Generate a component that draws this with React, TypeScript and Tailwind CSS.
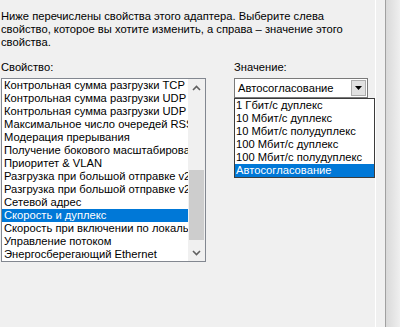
import React from "react";

const PROPS = [
  "Контрольная сумма разгрузки TCP (IPv6)",
  "Контрольная сумма разгрузки UDP (IPv4)",
  "Контрольная сумма разгрузки UDP (IPv6)",
  "Максимальное число очередей RSS",
  "Модерация прерывания",
  "Получение бокового масштабирования",
  "Приоритет & VLAN",
  "Разгрузка при большой отправке v2 (IPv4)",
  "Разгрузка при большой отправке v2 (IPv6)",
  "Сетевой адрес",
  "Скорость и дуплекс",
  "Скорость при включении по локальной сети",
  "Управление потоком",
  "Энергосберегающий Ethernet",
];

const VALUES = [
  "1 Гбит/с дуплекс",
  "10 Мбит/с дуплекс",
  "10 Мбит/с полудуплекс",
  "100 Мбит/с дуплекс",
  "100 Мбит/с полудуплекс",
  "Автосогласование",
];

const Chevron: React.FC<{ up?: boolean }> = ({ up }) => (
  <svg width="9" height="6" viewBox="0 0 9 6">
    <path
      d={up ? "M1 5 L4.5 1.5 L8 5" : "M1 1 L4.5 4.5 L8 1"}
      fill="none"
      stroke="#606060"
      strokeWidth="1.6"
    />
  </svg>
);

const App: React.FC = () => {
  const selectedProp = "Скорость и дуплекс";
  const selectedValue = "Автосогласование";

  return (
    <div className="flex h-[327px] w-[400px] bg-[#f0f0f0] font-['Liberation_Sans',Arial,sans-serif] text-[11.2px] leading-[13px] text-black overflow-hidden">
      {/* page content */}
      <div className="relative w-[375px] shrink-0 pl-[1px] pt-[10px]">
        <p>
          Ниже перечислены свойства этого адаптера. Выберите слева
          <br />
          свойство, которое вы хотите изменить, а справа – значение этого
          <br />
          свойства.
        </p>

        <div className="mt-[12px] flex">
          {/* left: property list */}
          <div className="w-[205px] shrink-0">
            <div>Свойство:</div>
            <div className="mt-[4px] flex h-[184px] border border-[#828790] bg-white">
              <ul className="flex-1 overflow-hidden">
                {PROPS.map((p) => (
                  <li
                    key={p}
                    className={
                      "h-[13px] whitespace-nowrap pl-[2px] " +
                      (p === selectedProp ? "bg-[#0078d7] text-white" : "")
                    }
                  >
                    {p}
                  </li>
                ))}
              </ul>
              {/* scrollbar */}
              <div className="flex w-[17px] shrink-0 flex-col bg-[#f0f0f0]">
                <div className="flex h-[17px] items-center justify-center">
                  <Chevron up />
                </div>
                <div className="flex-1 px-[1px] pt-[74px] pb-[4px]">
                  <div className="h-full bg-[#cdcdcd]" />
                </div>
                <div className="flex h-[17px] items-center justify-center">
                  <Chevron />
                </div>
              </div>
            </div>
          </div>

          {/* right: value */}
          <div className="relative ml-[28px] flex-1">
            <div>Значение:</div>
            <div className="mt-[4px] flex h-[20px] w-[134px] items-center border border-[#7a7a7a] bg-white">
              <span className="flex-1 pl-[3px]">{selectedValue}</span>
              <div className="mr-[1px] flex h-[16px] w-[15px] items-center justify-center border border-[#adadad] bg-[#e1e1e1]">
                <svg width="7" height="4" viewBox="0 0 7 4">
                  <path d="M0 0 L7 0 L3.5 4 Z" fill="#000" />
                </svg>
              </div>
            </div>
            <ul className="absolute left-0 top-[37px] z-10 w-[141px] border border-[#3c3c3c] bg-white">
              {VALUES.map((v) => (
                <li
                  key={v}
                  className={
                    "h-[13px] whitespace-nowrap pl-[1px] " +
                    (v === selectedValue ? "bg-[#0078d7] text-white" : "")
                  }
                >
                  {v}
                </li>
              ))}
            </ul>
          </div>
        </div>
      </div>

      {/* tab page / dialog edges */}
      <div className="w-[1px] shrink-0 bg-white" />
      <div className="w-[9px] shrink-0" />
      <div className="w-[1px] shrink-0 bg-[#a0a0a0]" />
      <div className="flex-1 bg-gradient-to-r from-[#d9d9d9] to-[#efefef]" />
    </div>
  );
};

export default App;
